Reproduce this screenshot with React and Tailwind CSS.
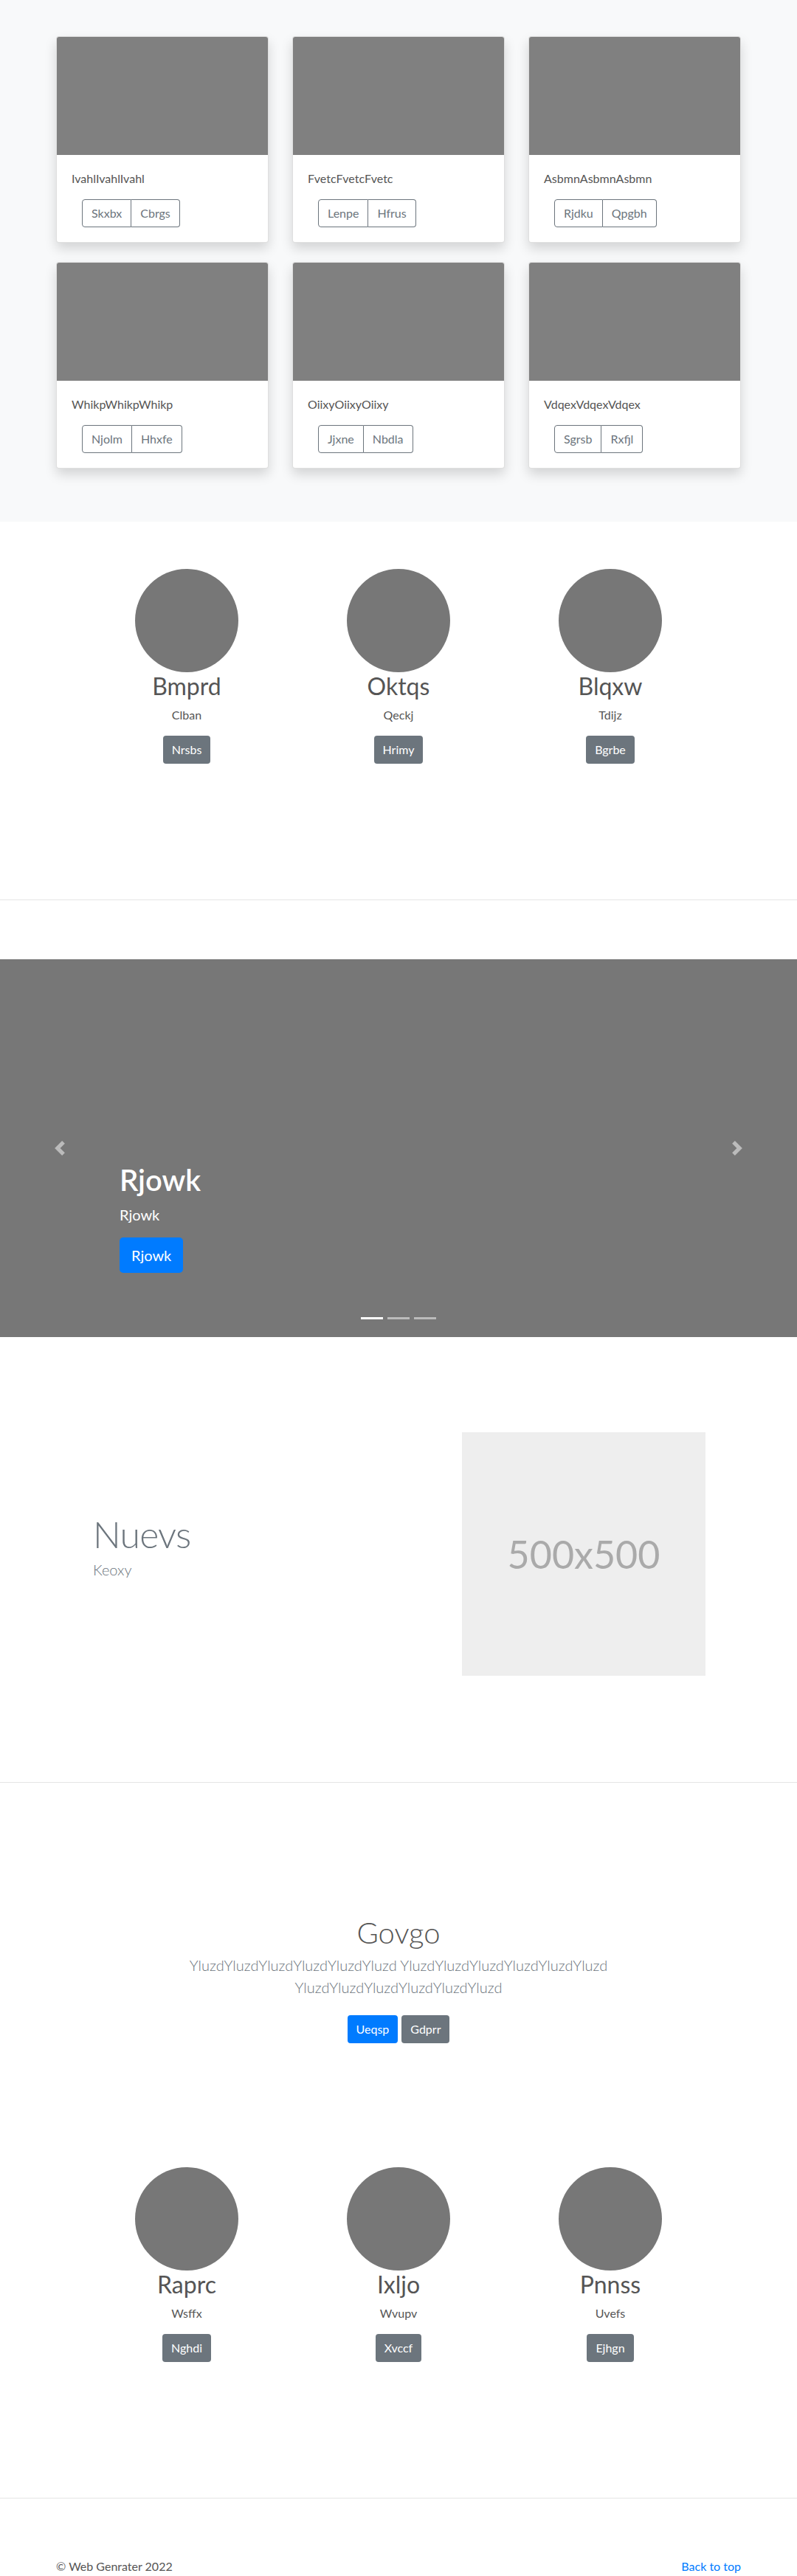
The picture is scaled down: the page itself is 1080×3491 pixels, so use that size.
const cards = [
  { title: "IvahlIvahlIvahl", btns: ["Skxbx", "Cbrgs"] },
  { title: "FvetcFvetcFvetc", btns: ["Lenpe", "Hfrus"] },
  { title: "AsbmnAsbmnAsbmn", btns: ["Rjdku", "Qpgbh"] },
  { title: "WhikpWhikpWhikp", btns: ["Njolm", "Hhxfe"] },
  { title: "OiixyOiixyOiixy", btns: ["Jjxne", "Nbdla"] },
  { title: "VdqexVdqexVdqex", btns: ["Sgrsb", "Rxfjl"] },
];

const teamA = [
  { name: "Bmprd", sub: "Clban", btn: "Nrsbs" },
  { name: "Oktqs", sub: "Qeckj", btn: "Hrimy" },
  { name: "Blqxw", sub: "Tdijz", btn: "Bgrbe" },
];

const teamB = [
  { name: "Raprc", sub: "Wsffx", btn: "Nghdi" },
  { name: "Ixljo", sub: "Wvupv", btn: "Xvccf" },
  { name: "Pnnss", sub: "Uvefs", btn: "Ejhgn" },
];

function Card({ title, btns }) {
  return (
    <div className="bg-white border border-black/[0.125] rounded overflow-hidden shadow-[0_8px_16px_rgba(0,0,0,0.15)]">
      <div className="h-[160px] bg-[#808080]" />
      <div className="p-5">
        <p className="text-[16px] leading-6 text-[#555] mb-4">{title}</p>
        <div className="ml-[14px] inline-flex">
          <button className="h-[38px] px-3 text-[16px] text-[#6c757d] border border-[#6c757d] rounded-l">
            {btns[0]}
          </button>
          <button className="h-[38px] px-3 text-[16px] text-[#6c757d] border border-l-0 border-[#6c757d] rounded-r">
            {btns[1]}
          </button>
        </div>
      </div>
    </div>
  );
}

function Team({ people }) {
  return (
    <section className="pt-16 pb-[184px]">
      <div className="w-[861px] mx-auto grid grid-cols-3">
        {people.map((p) => (
          <div key={p.name} className="flex flex-col items-center text-center">
            <div className="w-[140px] h-[140px] rounded-full bg-[#777]" />
            <h2 className="text-[32px] leading-[38px] text-[#555] mb-2">{p.name}</h2>
            <p className="text-[16px] leading-6 text-[#555] mb-4">{p.sub}</p>
            <button className="h-[38px] px-3 text-[16px] text-white bg-[#6c757d] rounded">{p.btn}</button>
          </div>
        ))}
      </div>
    </section>
  );
}

function Carousel() {
  return (
    <div className="relative h-[512px] bg-[#777]">
      <div className="absolute left-0 top-0 bottom-0 w-[162px] flex items-center justify-center">
        <svg width="20" height="20" viewBox="0 0 8 8" className="opacity-50">
          <path fill="#fff" d="M5.25 0l-4 4 4 4 1.5-1.5L4.25 4l2.5-2.5L5.25 0z" />
        </svg>
      </div>
      <div className="absolute right-0 top-0 bottom-0 w-[162px] flex items-center justify-center">
        <svg width="20" height="20" viewBox="0 0 8 8" className="opacity-50">
          <path fill="#fff" d="M2.75 0l-1.5 1.5L3.75 4l-2.5 2.5L2.75 8l4-4-4-4z" />
        </svg>
      </div>
      <div className="absolute left-[162px] bottom-[87px] text-white">
        <h1 className="text-[40px] leading-[48px] font-semibold mb-2">Rjowk</h1>
        <p className="text-[20px] leading-[30px] mb-4">Rjowk</p>
        <button className="h-12 px-4 text-[20px] text-white bg-[#007bff] rounded-[5px]">Rjowk</button>
      </div>
      <div className="absolute bottom-6 left-0 right-0 flex justify-center gap-[6px]">
        <span className="w-[30px] h-[3px] bg-white" />
        <span className="w-[30px] h-[3px] bg-white/50" />
        <span className="w-[30px] h-[3px] bg-white/50" />
      </div>
    </div>
  );
}

export default function App() {
  return (
    <div className="font-['Lato','Liberation_Sans',sans-serif] bg-white">
      <section className="bg-[#f8f9fa] pt-[49px] pb-[72px]">
        <div className="w-[928px] mx-auto grid grid-cols-3 gap-x-8 gap-y-[26px]">
          {cards.map((c) => (
            <Card key={c.title} {...c} />
          ))}
        </div>
      </section>

      <Team people={teamA} />

      <hr className="border-0 border-t border-[#e5e5e5] m-0" />

      <div className="pt-[80px]">
        <Carousel />
      </div>

      <section className="pt-[129px] pb-[144px]">
        <div className="w-[928px] mx-auto flex items-center">
          <div className="flex-1 pl-[50px]">
            <h2 className="text-[50px] leading-[50px] font-light tracking-[-0.8px] text-[#6c757d] mb-2">Nuevs</h2>
            <p className="text-[20px] leading-[30px] font-light text-[#6c757d] mb-4">Keoxy</p>
          </div>
          <div className="w-[330px] h-[330px] mr-[48px] bg-[#eee] flex items-center justify-center">
            <span className="text-[52px] text-[#aaa]">500x500</span>
          </div>
        </div>
      </section>

      <hr className="border-0 border-t border-[#e5e5e5] m-0" />

      <section className="pt-[179px] pb-[104px] text-center">
        <h1 className="text-[40px] leading-[48px] font-light text-[#555] mb-[5px]">Govgo</h1>
        <p className="w-[610px] mx-auto text-[20px] leading-[30px] font-light text-[#6c757d] mb-[23px]">
          YluzdYluzdYluzdYluzdYluzdYluzd YluzdYluzdYluzdYluzdYluzdYluzd YluzdYluzdYluzdYluzdYluzdYluzd
        </p>
        <div className="flex justify-center gap-[5px]">
          <button className="h-[38px] px-3 text-[16px] text-white bg-[#007bff] rounded">Ueqsp</button>
          <button className="h-[38px] px-3 text-[16px] text-white bg-[#6c757d] rounded">Gdprr</button>
        </div>
      </section>

      <Team people={teamB} />

      <hr className="border-0 border-t border-[#e5e5e5] m-0" />

      <footer className="pt-[80px]">
        <div className="w-[928px] mx-auto flex justify-between text-[16px] leading-6">
          <p className="text-[#555]">© Web Genrater 2022</p>
          <a href="#" className="text-[#007bff]">Back to top</a>
        </div>
      </footer>
    </div>
  );
}
